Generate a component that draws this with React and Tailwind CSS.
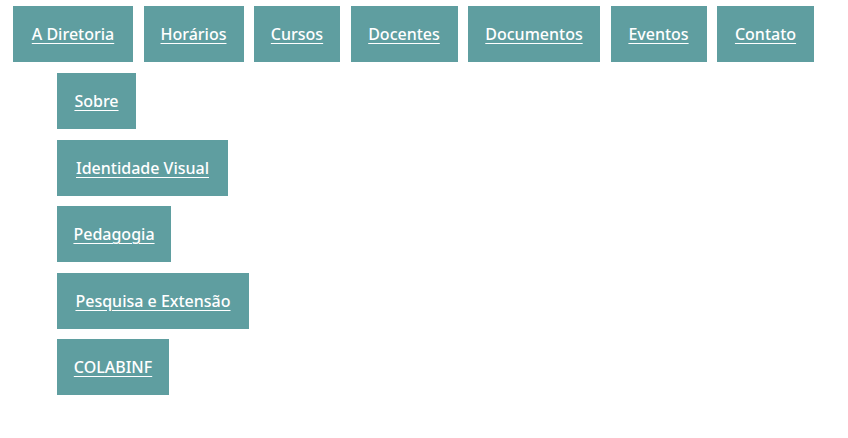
const topItems = [
  { label: 'A Diretoria', w: 'w-[120px]' },
  { label: 'Horários', w: 'w-[100px]' },
  { label: 'Cursos', w: 'w-[86px]' },
  { label: 'Docentes', w: 'w-[107px]' },
  { label: 'Documentos', w: 'w-[132px]' },
  { label: 'Eventos', w: 'w-[96px]' },
  { label: 'Contato', w: 'w-[97px]' },
];

const subItems = [
  { label: 'Sobre', w: 'w-[79px]' },
  { label: 'Identidade Visual', w: 'w-[171px]' },
  { label: 'Pedagogia', w: 'w-[114px]' },
  { label: 'Pesquisa e Extensão', w: 'w-[192px]' },
  { label: 'COLABINF', w: 'w-[112px]' },
];

function MenuLink({ label, w }) {
  return (
    <a
      href="#"
      className={`${w} h-[56px] flex items-center justify-center bg-[#5f9ea0] text-white underline underline-offset-[3px] text-[16px] font-medium`}
    >
      {label}
    </a>
  );
}

export default function App() {
  return (
    <div className="min-h-screen bg-white font-['Noto_Sans','Liberation_Sans',sans-serif]">
      <nav className="pt-[6px] pl-[13px]">
        <ul className="flex gap-[10.5px]">
          {topItems.map((item) => (
            <li key={item.label}>
              <MenuLink {...item} />
            </li>
          ))}
        </ul>
        <ul className="flex flex-col gap-[10.6px] mt-[11px] ml-[44px]">
          {subItems.map((item) => (
            <li key={item.label} className="flex">
              <MenuLink {...item} />
            </li>
          ))}
        </ul>
      </nav>
    </div>
  );
}
